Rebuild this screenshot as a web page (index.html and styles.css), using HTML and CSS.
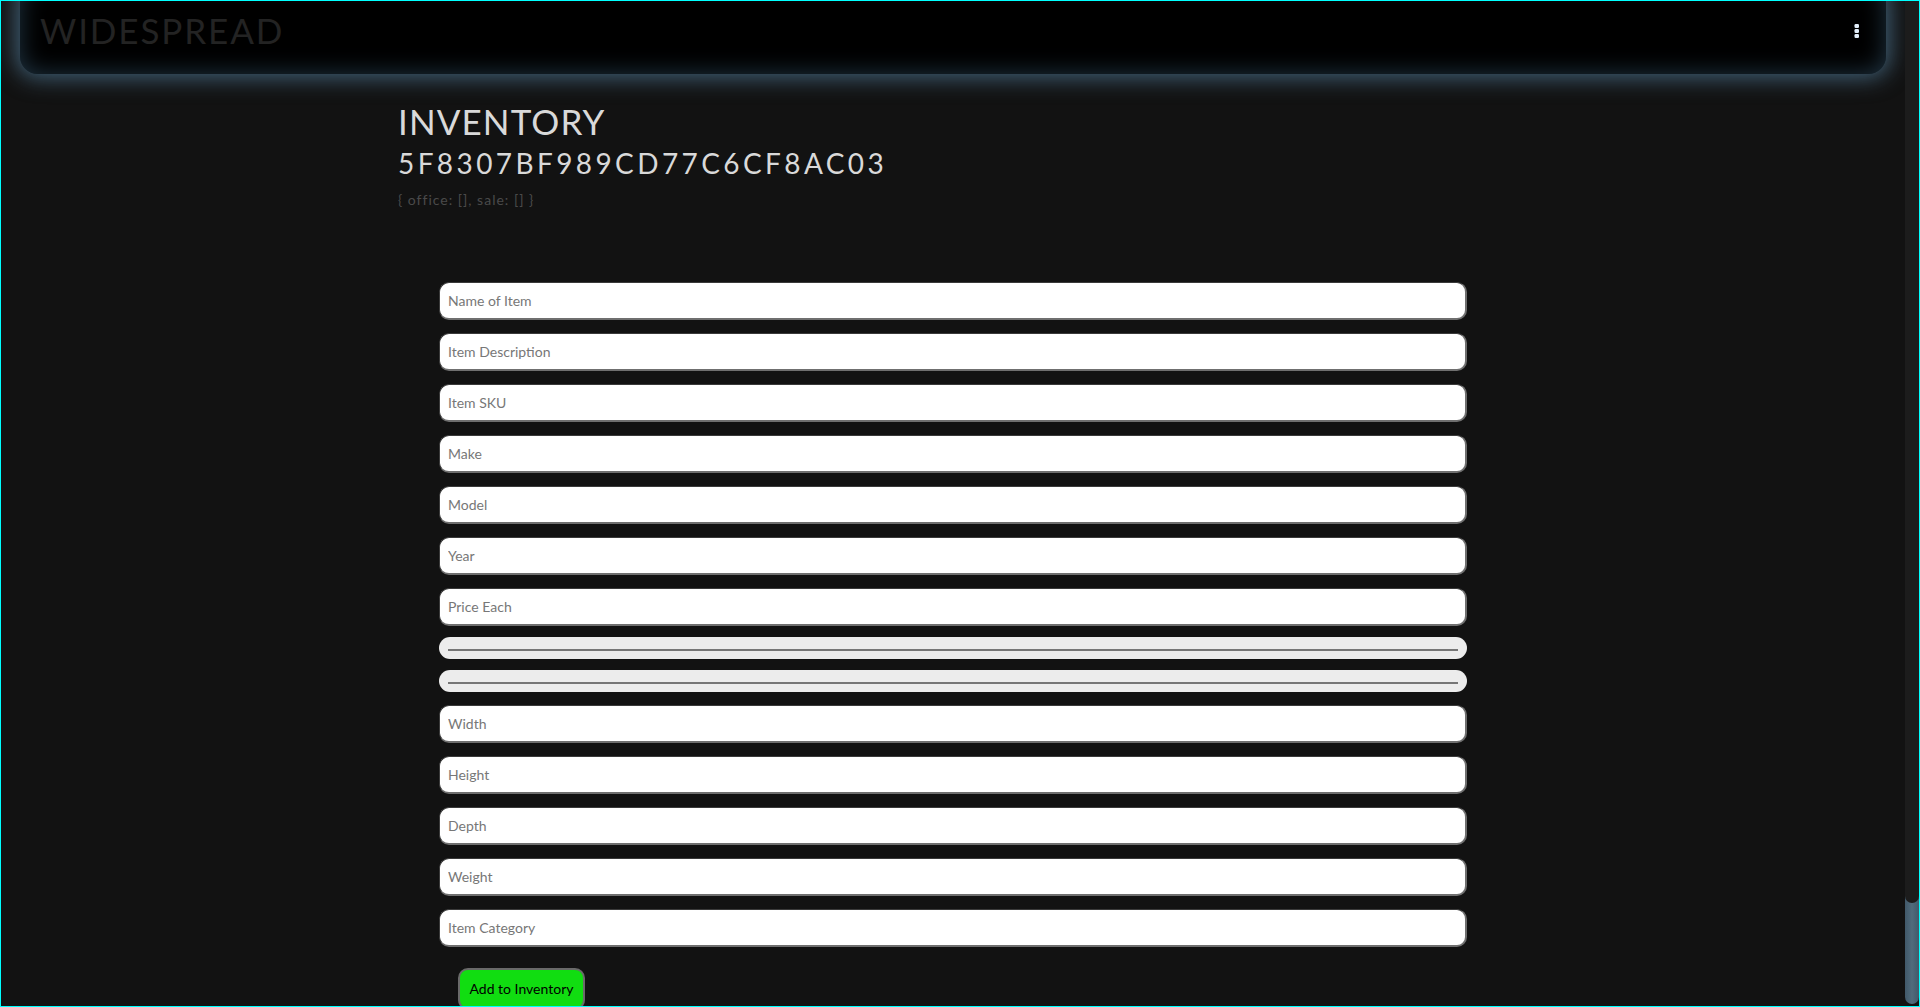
FILE: index.html
```html
<!DOCTYPE html>
<html lang="en">
<head>
<meta charset="utf-8">
<title>Widespread - Inventory</title>
<link rel="stylesheet" href="styles.css">
</head>
<body>
<div class="frame">
  <div class="page">
    <header class="topbar">
      <div class="brand">WIDESPREAD</div>
      <button class="kebab" aria-label="menu">
        <svg width="6" height="14" viewBox="0 0 6 14">
          <rect x="0.5" y="0" width="4.5" height="4" rx="1.2" fill="#e2eefa"/>
          <rect x="0.5" y="5" width="4.5" height="4" rx="1.2" fill="#e2eefa"/>
          <rect x="0.5" y="10" width="4.5" height="4" rx="1.2" fill="#e2eefa"/>
        </svg>
      </button>
    </header>
    <main class="container">
      <h1 class="title">INVENTORY</h1>
      <h2 class="inv-id">5F8307BF989CD77C6CF8AC03</h2>
      <p class="meta">{ office: [], sale: [] }</p>
      <form class="item-form">
        <input class="field" type="text" placeholder="Name of Item">
        <input class="field" type="text" placeholder="Item Description">
        <input class="field" type="text" placeholder="Item SKU">
        <input class="field" type="text" placeholder="Make">
        <input class="field" type="text" placeholder="Model">
        <input class="field" type="text" placeholder="Year">
        <input class="field" type="text" placeholder="Price Each">
        <input class="slider" type="range">
        <input class="slider" type="range">
        <input class="field" type="text" placeholder="Width">
        <input class="field" type="text" placeholder="Height">
        <input class="field" type="text" placeholder="Depth">
        <input class="field" type="text" placeholder="Weight">
        <input class="field" type="text" placeholder="Item Category">
        <div class="actions">
          <button class="add-btn" type="button">Add to Inventory</button>
        </div>
      </form>
    </main>
  </div>
  <div class="scrollbar"><div class="thumb"></div></div>
</div>
</body>
</html>
```
FILE: styles.css
```css
html, body {
  margin: 0;
  height: 100%;
  overflow: hidden;
  background: #121212;
}

.frame {
  height: 100vh;
  box-sizing: border-box;
  border: 1px solid #00ffff;
  display: flex;
  font-family: Lato, "Noto Sans", sans-serif;
}

.page {
  flex: 1;
  min-width: 0;
  overflow: hidden;
}

.scrollbar {
  flex: none;
  width: 14px;
  background: linear-gradient(to right, #41596a, #516b7c 50%, #41596a);
  border-radius: 0 0 7px 7px;
  margin-bottom: 2px;
}

.thumb {
  height: 902px;
  background: #1c1c1c;
  border-radius: 0 0 7px 7px;
}

/* Header */
.topbar {
  margin: -20px 19px 0;
  height: 93px;
  box-sizing: border-box;
  padding: 18px 26px 14px 20px;
  background: #000;
  border-radius: 18px;
  box-shadow: 0 0 22px 4px rgba(72, 108, 134, 0.85), inset 0 0 24px rgba(60, 98, 126, 0.55);
  display: flex;
  align-items: center;
  justify-content: space-between;
}

.brand {
  font-size: 35px;
  line-height: 42px;
  letter-spacing: 1.9px;
  color: #232323;
}

.kebab {
  background: none;
  border: 0;
  padding: 0;
  margin-top: 2px;
  display: flex;
}

/* Main */
.container {
  width: 1140px;
  box-sizing: border-box;
  margin: 0 auto;
  padding: 27px 15px 0;
}

.title {
  margin: 0;
  font-size: 35px;
  line-height: 40px;
  font-weight: 400;
  letter-spacing: 1.1px;
  color: #d9d9d9;
}

.inv-id {
  margin: 5px 0 0;
  font-size: 28px;
  line-height: 34px;
  font-weight: 400;
  letter-spacing: 3.4px;
  color: #d9d9d9;
}

.meta {
  margin: 11px 0 0;
  font-size: 14px;
  line-height: 18px;
  letter-spacing: 1px;
  color: #4a4a4a;
}

.item-form {
  margin-top: 73px;
  padding: 0 41px;
  display: flex;
  flex-direction: column;
  gap: 13px;
}

.field {
  height: 38px;
  box-sizing: border-box;
  margin: 0;
  padding: 0 8px;
  background: #fff;
  border: 1px solid #3a3a3a;
  border-right: 2px solid #6f6f6f;
  border-bottom: 2px solid #6f6f6f;
  border-radius: 10px;
  font-family: Lato, "Noto Sans", sans-serif;
  font-size: 14px;
  color: #333;
  outline: none;
}

.field::placeholder {
  color: #777;
}

.slider {
  -webkit-appearance: none;
  appearance: none;
  margin: -2px 0 0;
  height: 22px;
  box-sizing: border-box;
  padding: 3px 9px 0;
  background: #ececec;
  border: 0;
  border-radius: 11px;
  outline: none;
}

.slider::-webkit-slider-runnable-track {
  height: 2px;
  background: #767676;
}

.slider::-webkit-slider-thumb {
  -webkit-appearance: none;
  appearance: none;
  width: 0;
  height: 0;
}

.actions {
  margin-top: 8px;
  padding-left: 19px;
  display: flex;
}

.add-btn {
  width: 127px;
  box-sizing: border-box;
  padding: 10px 8px;
  background: #11dd11;
  border: 2px solid #6a6a6a;
  border-radius: 10px;
  font-family: Lato, "Noto Sans", sans-serif;
  font-size: 14px;
  line-height: 18px;
  color: #000;
  white-space: nowrap;
}
```
